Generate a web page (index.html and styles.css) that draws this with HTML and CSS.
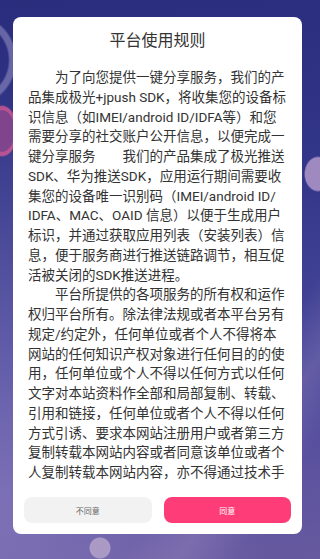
FILE: index.html
```html
<!DOCTYPE html>
<html lang="zh-CN">
<head>
    <meta charset="UTF-8">
    <meta name="viewport" content="width=device-width, initial-scale=1.0">
    <title>平台使用规则</title>
    <link rel="stylesheet" href="styles.css">
</head>
<body>
    <div class="screen">
        <div class="dialog">
            <h2 class="dialog-title">平台使用规则</h2>
            <div class="dialog-body">
                <p>为了向您提供一键分享服务，我们的产品集成极光+jpush SDK，将收集您的设备标识信息（如IMEI/android ID/IDFA等）和您需要分享的社交账户公开信息，以便完成一键分享服务　　我们的产品集成了极光推送SDK、华为推送SDK，应用运行期间需要收集您的设备唯一识别码（IMEI/android ID/<wbr>IDFA、MAC、OAID 信息）以便于生成用户标识，并通过获取应用列表（安装列表）信息，便于服务商进行推送链路调节，相互促活被关闭的SDK推送进程。</p>
                <p>平台所提供的各项服务的所有权和运作权归平台所有。除法律法规或者本平台另有规定/约定外，任何单位或者个人不得将本网站的任何知识产权对象进行任何目的的使用，任何单位或个人不得以任何方式以任何文字对本站资料作全部和局部复制、转载、引用和链接，任何单位或者个人不得以任何方式引诱、要求本网站注册用户或者第三方复制转载本网站内容或者同意该单位或者个人复制转载本网站内容，亦不得通过技术手段对本网站内容进行抓取、镜像等操作。</p>
            </div>
            <div class="dialog-actions">
                <button class="btn btn-cancel">不同意</button>
                <button class="btn btn-ok">同意</button>
            </div>
        </div>
    </div>
</body>
</html>
```

FILE: styles.css
```css
html, body {
    margin: 0;
    padding: 0;
}

body {
    font-family: Roboto, "Noto Sans CJK SC", sans-serif;
    color: #333;
}

.screen {
    width: 320px;
    height: 559px;
    overflow: hidden;
    padding: 17px 18px 0 13px;
    box-sizing: border-box;
    background:
        radial-gradient(circle at 100px 548px, rgba(235, 215, 225, 0.45) 0, rgba(235, 215, 225, 0.45) 10px, transparent 11px),
        radial-gradient(ellipse 16px 26px at 2px 131px, rgba(140, 70, 140, 0.85) 0, rgba(140, 70, 140, 0.85) 78%, rgba(225, 90, 150, 0.75) 82%, rgba(225, 90, 150, 0.75) 94%, transparent 100%),
        radial-gradient(ellipse 14px 18px at 318px 174px, rgba(195, 165, 210, 0.75) 0, rgba(195, 165, 210, 0.75) 90%, transparent 100%),
        radial-gradient(circle at -30px 60px, transparent 0, transparent 38px, rgba(190, 185, 225, 0.4) 40px, rgba(190, 185, 225, 0.4) 45px, transparent 47px),
        linear-gradient(125deg, transparent 0, transparent 72%, rgba(160, 140, 190, 0.3) 80%, transparent 88%),
        radial-gradient(ellipse at 0 500px, rgba(150, 135, 200, 0.55) 0, transparent 60%),
        linear-gradient(175deg, #2a2c7c 0%, #33378a 35%, #47479a 65%, #5d539f 85%, #66599f 100%);
}

.dialog {
    width: 289px;
    height: 517px;
    background: #fff;
    border-radius: 8px;
    display: flex;
    flex-direction: column;
}

.dialog-title {
    margin: 0;
    padding: 13px 0 16px;
    font-size: 16px;
    line-height: 22px;
    font-weight: normal;
    text-align: center;
    color: #333;
}

.dialog-body {
    height: 415px;
    padding: 0 15px;
    overflow-y: auto;
    scrollbar-width: none;
    font-size: 13.5px;
    line-height: 19.75px;
    color: #333;
}

.dialog-body p {
    margin: 0;
    text-indent: 2em;
}

.dialog-actions {
    display: flex;
    gap: 12px;
    padding: 14px 11px 11px;
}

.btn {
    flex: 1;
    height: 26px;
    border: none;
    border-radius: 8px;
    font-family: inherit;
    font-size: 8px;
    cursor: pointer;
}

.btn-cancel {
    background-color: #f2f2f2;
    color: #666;
}

.btn-ok {
    background-color: #fe3d78;
    color: #fff;
}
```
